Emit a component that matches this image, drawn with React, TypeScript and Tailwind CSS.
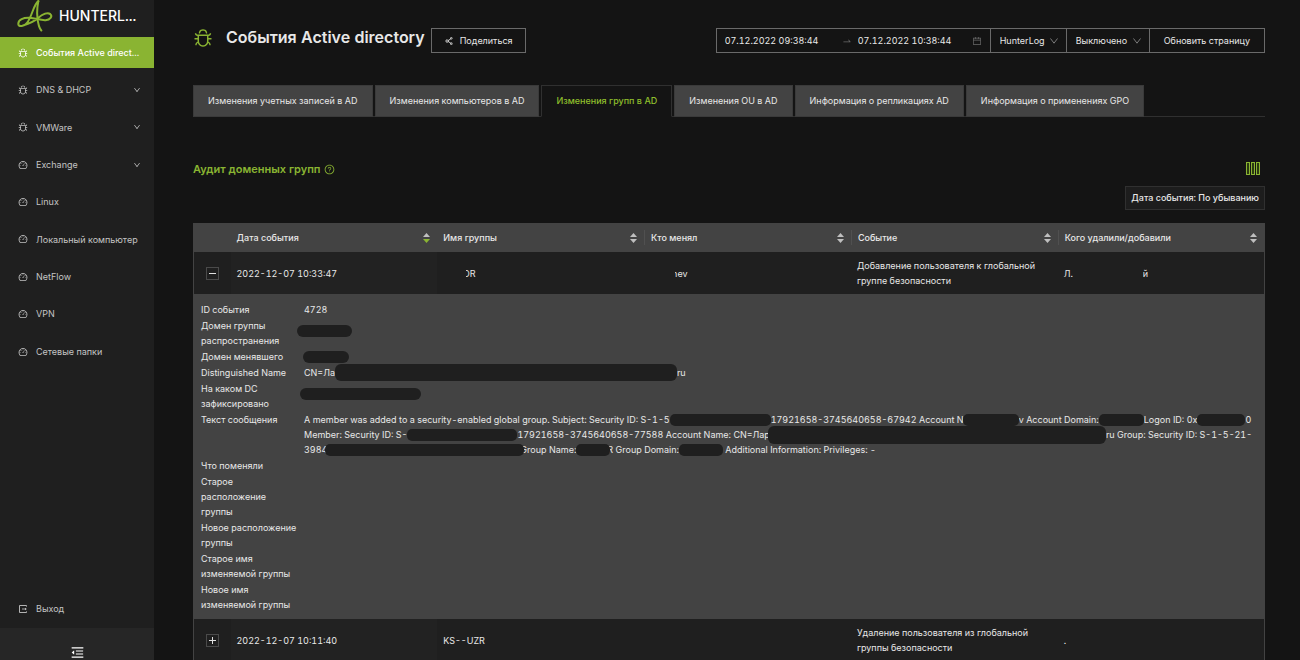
import type { ReactNode } from 'react';
import { clsx } from 'clsx';
import {
  AiOutlineBug,
  AiOutlineCalendar,
  AiOutlineDashboard,
  AiOutlineDown,
  AiOutlineMenuFold,
  AiOutlineQuestionCircle,
  AiOutlineShareAlt,
  AiOutlineSwapRight,
} from 'react-icons/ai';

const menu = [
  { label: 'События Active direct...', icon: AiOutlineBug, active: true },
  { label: 'DNS & DHCP', icon: AiOutlineBug, nested: true },
  { label: 'VMWare', icon: AiOutlineBug, nested: true },
  { label: 'Exchange', icon: AiOutlineDashboard, nested: true },
  { label: 'Linux', icon: AiOutlineDashboard },
  { label: 'Локальный компьютер', icon: AiOutlineDashboard },
  { label: 'NetFlow', icon: AiOutlineDashboard },
  { label: 'VPN', icon: AiOutlineDashboard },
  { label: 'Сетевые папки', icon: AiOutlineDashboard },
];

const tabs = [
  'Изменения учетных записей в AD',
  'Изменения компьютеров в AD',
  'Изменения групп в AD',
  'Изменения OU в AD',
  'Информация о репликациях AD',
  'Информация о применениях GPO',
];

const columns = [
  'Дата события',
  'Имя группы',
  'Кто менял',
  'Событие',
  'Кого удалили/добавили',
];

function Logo() {
  return (
    <svg
      viewBox="50 0 108 95"
      className="h-8 w-9 shrink-0"
      fill="none"
      stroke="#8ab432"
      strokeWidth="6"
      strokeLinecap="round"
    >
      <path d="M114 3C99 14 95 50 80 68C71 79 56 81 54 72C53 58 70 52 88 53C106 54 120 61 136 60C150 59 157 48 150 42C142 36 127 42 116 51C104 62 88 70 68 76" />
      <path d="M114 3C109 28 110 58 116 78C118 84 120 88 123 91" />
    </svg>
  );
}

function ColumnsIcon() {
  return (
    <svg viewBox="0 0 14 14" className="size-3.5" fill="#2b3a10" stroke="#8ab432">
      <rect x="0.5" y="0.5" width="3" height="12" />
      <rect x="5.5" y="0.5" width="3" height="12" />
      <rect x="10.5" y="0.5" width="3" height="12" />
    </svg>
  );
}

function ExitIcon() {
  return (
    <svg viewBox="0 0 10 10" className="size-[10px]" fill="none" stroke="currentColor">
      <path d="M8.5 2.6V1.5H1.5V8.5H8.5V7.4" strokeWidth="0.9" />
      <path d="M4 5H8" strokeWidth="0.8" />
      <path d="M7 3.8L8.8 5L7 6.2Z" fill="currentColor" stroke="none" />
    </svg>
  );
}

/* Hides private data inside a line of text */
function Redacted({ className }: { className: string }) {
  return (
    <span
      className={clsx(
        'relative inline-block shrink-0 bg-[#1f1f1f]',
        className,
      )}
    />
  );
}

function Sorter({ desc }: { desc?: boolean }) {
  return (
    <svg viewBox="0 0 7 10" className="h-[10px] w-[7px]" fill="#bfbfbf">
      <path d="M3.5 0L7 4H0Z" />
      <path d="M0 6H7L3.5 10Z" className={clsx(desc && 'fill-[#8ab432]')} />
    </svg>
  );
}

function ExpandButton({ open }: { open?: boolean }) {
  return (
    <button
      type="button"
      aria-label={open ? 'Свернуть' : 'Развернуть'}
      className="mx-auto flex size-[13px] items-center justify-center border border-[#4a4a4a]"
    >
      <svg viewBox="0 0 7 7" className="size-[7px]" stroke="#e0e0e0">
        <path d={open ? 'M0 3.5H7' : 'M0 3.5H7M3.5 0V7'} />
      </svg>
    </button>
  );
}

function Sidebar() {
  return (
    <aside className="flex w-[154px] shrink-0 flex-col bg-[#1f1f1f] text-[#c4c4c4]">
      <div className="flex h-[37px] items-start gap-[6px] pl-[17px]">
        <Logo />
        <span className="pt-[6px] text-[14px] leading-[20px] font-medium text-white">
          HUNTERL...
        </span>
      </div>
      <nav className="flex h-[330px] flex-col justify-between">
        {menu.map(({ label, icon: Icon, active, nested }) => (
          <a
            key={label}
            href="#"
            className={clsx(
              'flex h-[31px] items-center gap-2 pr-[12px] pl-[18px] whitespace-nowrap',
              active && 'bg-[#8ab432] font-medium text-white',
            )}
          >
            <Icon className="size-[10px] shrink-0" />
            <span className="flex-1">{label}</span>
            {nested && <AiOutlineDown className="mr-[1px] size-2" />}
          </a>
        ))}
      </nav>
      <a href="#" className="mt-auto flex h-[38px] items-center gap-2 pl-[18px]">
        <ExitIcon />
        Выход
      </a>
      <button
        type="button"
        aria-label="Свернуть меню"
        className="flex h-8 items-end justify-center bg-[#262626] text-white"
      >
        <AiOutlineMenuFold className="size-[15px]" />
      </button>
    </aside>
  );
}

function Picker({ label, value }: { label: string; value: string }) {
  return (
    <div className="relative -ml-px flex items-center border border-[#6a6a6a]">
      <select
        aria-label={label}
        className="h-full appearance-none bg-transparent pr-[21px] pl-[9px] outline-none"
      >
        <option>{value}</option>
      </select>
      <svg
        viewBox="0 0 8 6"
        className="pointer-events-none absolute right-[8px] h-[6px] w-[8px]"
        fill="none"
        stroke="#7a7a7a"
      >
        <path d="M0.5 0.5L4 5.2L7.5 0.5" />
      </svg>
    </div>
  );
}

function Header() {
  return (
    <header className="flex items-start pt-[28px]">
      <AiOutlineBug className="size-[20px] text-[#8ab432]" />
      <h1 className="-mt-[3px] ml-[13px] text-[16px] leading-[24px] font-semibold">
        События Active directory
      </h1>
      <button
        type="button"
        className="ml-[6px] flex h-[25px] items-center gap-[6px] border border-[#6a6a6a] px-[12px]"
      >
        <AiOutlineShareAlt className="size-[10px]" />
        Поделиться
      </button>
      <div className="ml-auto flex h-[25px]">
        <div className="flex items-center border border-[#6a6a6a] px-[8px]">
          <input
            aria-label="Начало периода"
            defaultValue="07.12.2022 09:38:44"
            className="w-[117px] bg-transparent outline-none"
          />
          <AiOutlineSwapRight className="mr-[6px] size-[10px] text-[#6a6a6a]" />
          <input
            aria-label="Конец периода"
            defaultValue="07.12.2022 10:38:44"
            className="w-[114px] bg-transparent outline-none"
          />
          <AiOutlineCalendar className="size-[10px] text-[#6a6a6a]" />
        </div>
        <Picker label="Источник" value="HunterLog" />
        <Picker label="Автообновление" value="Выключено" />
        <button type="button" className="-ml-px border border-[#6a6a6a] px-[14px]">
          Обновить страницу
        </button>
      </div>
    </header>
  );
}

function Tabs() {
  return (
    <div role="tablist" className="mt-[32px] flex gap-[2px] border-b border-[#303030]">
      {tabs.map((tab, i) => (
        <button
          key={tab}
          type="button"
          role="tab"
          aria-selected={i === 2}
          className={clsx(
            '-mb-px h-[32px] border px-[14px] whitespace-nowrap',
            i === 2
              ? 'border-[#303030] border-b-[#141414] font-medium text-[#8fbf2c]'
              : 'border-[#3a3a3a] bg-[#434343]',
          )}
        >
          {tab}
        </button>
      ))}
    </div>
  );
}

function Message() {
  return (
    <>
      <span className="flex items-center whitespace-pre">
        A member was added to a security-enabled global group. Subject: Security ID: S-1-5
        <Redacted className="h-[12px] w-[101px] rounded-[5px]" />
        17921658-3745640658-67942 Account Na
        <Redacted className="-ml-[6px] h-[12px] w-[56px] rounded-[5px]" />v Account Domain:
        <Redacted className="h-[12px] w-[45px] rounded-[5px]" />
        Logon ID: 0x
        <Redacted className="h-[12px] w-[48px] rounded-[5px]" />0
      </span>
      <span className="flex items-center whitespace-pre">
        Member: Security ID: S-
        <Redacted className="h-[12px] w-[110px] rounded-[5px]" />
        17921658-3745640658-77588 Account Name: CN=Лар
        <Redacted className="-my-[2px] -ml-[2px] h-[18px] w-[338px] rounded-[6px]" />
        ru Group: Security ID: S-1-5-21-
      </span>
      <span className="flex items-center whitespace-pre">
        3984
        <Redacted className="-ml-[2px] h-[12px] w-[199px] rounded-[5px]" />
        <span className="-ml-[4px]">Group Name:</span>
        <Redacted className="h-[12px] w-[34px] rounded-[5px]" />
        <span className="-ml-[3px]">R Group Domain:</span>
        <Redacted className="h-[12px] w-[44px] rounded-[5px]" />
        {' Additional Information: Privileges: -'}
      </span>
    </>
  );
}

const details: { label: string; value?: ReactNode }[] = [
  { label: 'ID события', value: '4728' },
  {
    label: 'Домен группы распространения',
    value: <Redacted className="mb-[4px] -ml-[7px] h-[12px] w-[55px] rounded-[6px]" />,
  },
  {
    label: 'Домен менявшего',
    value: <Redacted className="-ml-[1px] h-[12px] w-[46px] rounded-[6px]" />,
  },
  {
    label: 'Distinguished Name',
    value: (
      <span className="flex h-[15px] items-center">
        CN=Ла
        <Redacted className="h-[17px] w-[342px] rounded-[6px]" />
        ru
      </span>
    ),
  },
  {
    label: 'На каком DC зафиксировано',
    value: <Redacted className="mb-[4px] -ml-[4px] h-[12px] w-[121px] rounded-[6px]" />,
  },
  { label: 'Текст сообщения', value: <Message /> },
  { label: 'Что поменяли' },
  { label: 'Старое расположение группы' },
  { label: 'Новое расположение группы' },
  { label: 'Старое имя изменяемой группы' },
  { label: 'Новое имя изменяемой группы' },
];

function Details() {
  return (
    <dl className="flex flex-col gap-px pt-[8px] pb-[7px] pl-[7px] leading-[15px]">
      {details.map(({ label, value }) => (
        <div key={label} className="flex">
          <dt className="w-[103px] shrink-0 pr-[6px]">{label}</dt>
          <dd className="flex min-w-0 flex-col justify-center">{value}</dd>
        </div>
      ))}
    </dl>
  );
}

function EventsTable() {
  return (
    <table className="mt-[13px] w-full table-fixed border-x border-[#434343] text-left">
      <thead>
        <tr className="h-[29px] bg-[#434343]">
          <th className="w-[37px]" />
          {columns.map((column, i) => (
            <th key={column} className="p-0 font-medium">
              <div
                className={clsx(
                  'flex h-[15px] items-center justify-between pr-[7px] pl-[6px]',
                  i > 1 && 'border-l border-[#505050]',
                )}
              >
                {column}
                <Sorter desc={i === 0} />
              </div>
            </th>
          ))}
        </tr>
      </thead>
      <tbody className="leading-[15px]">
        <tr className="h-[42px] bg-[#1f1f1f]">
          <td>
            <ExpandButton open />
          </td>
          <td className="bg-[#222222] px-[6px]">2022-12-07 10:33:47</td>
          <td className="px-[6px]">
            <span className="flex items-center">
              <Redacted className="h-[12px] w-[20px]" />
              <span>D</span>
              <Redacted className="-ml-[7px] h-[12px] w-[3px]" />
              <span className="ml-[4px]">R</span>
            </span>
          </td>
          <td className="px-[6px]">
            <span className="flex items-center">
              <Redacted className="h-[12px] w-[22px]" />
              <span>n</span>
              <Redacted className="-ml-[6px] h-[12px] w-[4px]" />
              <span className="ml-[2px]">ev</span>
            </span>
          </td>
          <td className="px-[6px]">Добавление пользователя к глобальной группе безопасности</td>
          <td className="px-[6px]">
            <span className="flex items-center">
              Л.
              <Redacted className="h-[12px] w-[70px]" />й
            </span>
          </td>
        </tr>
        <tr className="bg-[#434343]">
          <td colSpan={6} className="p-0">
            <Details />
          </td>
        </tr>
        <tr className="h-[42px] bg-[#1f1f1f]">
          <td>
            <ExpandButton />
          </td>
          <td className="bg-[#222222] px-[6px]">2022-12-07 10:11:40</td>
          <td className="px-[6px]">KS--UZR</td>
          <td />
          <td className="px-[6px]">Удаление пользователя из глобальной группы безопасности</td>
          <td className="px-[6px]">.</td>
        </tr>
      </tbody>
    </table>
  );
}

export default function App() {
  return (
    <div className="flex h-screen overflow-hidden bg-[#141414] font-['Inter','Liberation_Sans',sans-serif] text-[9px] text-[#e8e8e8] tabular-nums">
      <Sidebar />
      <main className="min-w-0 flex-1 pr-[35px] pl-[39px]">
        <Header />
        <Tabs />
        <div className="mt-[43px] flex h-[18px] items-center justify-between pr-[5px]">
          <h2 className="flex items-center gap-[3px] text-[11px] font-semibold text-[#8ab432]">
            Аудит доменных групп
            <AiOutlineQuestionCircle className="size-[11px]" />
          </h2>
          <button type="button" aria-label="Настроить столбцы">
            <ColumnsIcon />
          </button>
        </div>
        <div className="mt-[8px] flex justify-end">
          <button
            type="button"
            className="h-[24px] border border-[#303030] bg-[#1d1d1d] px-[5px] font-medium"
          >
            Дата события: По убыванию
          </button>
        </div>
        <EventsTable />
      </main>
    </div>
  );
}
